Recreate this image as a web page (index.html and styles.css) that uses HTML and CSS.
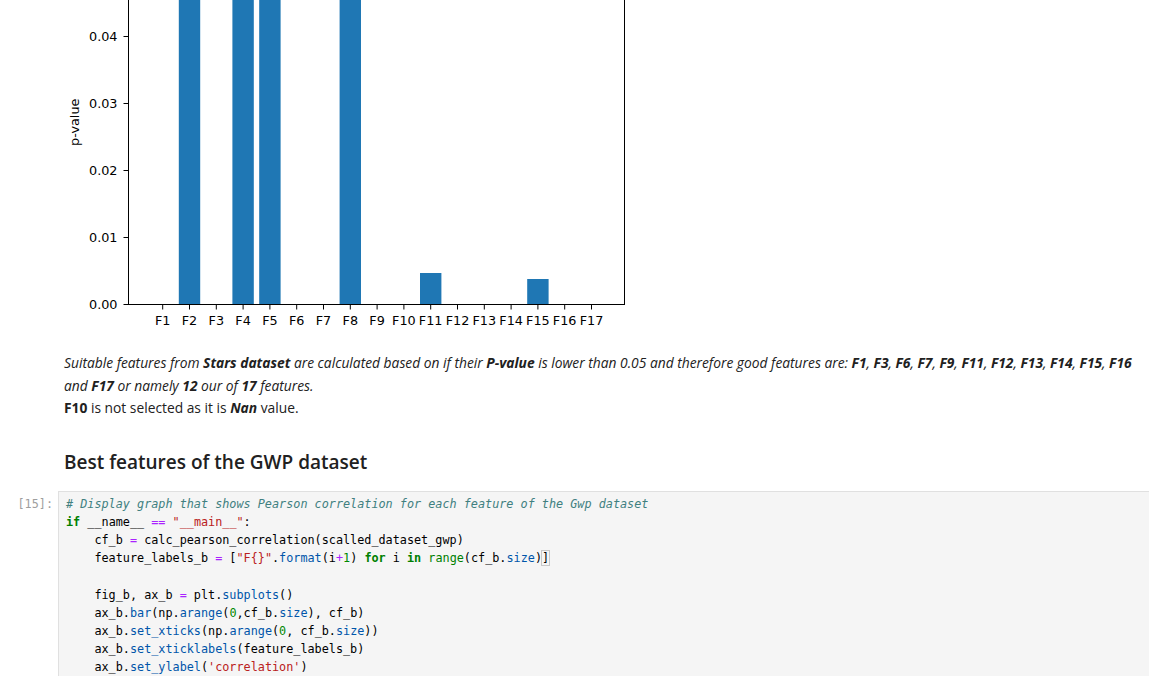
FILE: index.html
```html
<!DOCTYPE html>
<html lang="en">
<head>
<meta charset="utf-8">
<title>Notebook</title>
<link rel="stylesheet" href="styles.css">
</head>
<body>
<div class="notebook">
  <div class="output">
    <svg class="chart" width="600" height="335" viewBox="0 0 600 335" xmlns="http://www.w3.org/2000/svg">
      <g class="bars" fill="#1f77b4">
        <rect x="114.8" y="-10" width="21.4" height="314.5"/>
        <rect x="168.4" y="-10" width="21.4" height="314.5"/>
        <rect x="195.2" y="-10" width="21.4" height="314.5"/>
        <rect x="275.6" y="-10" width="21.4" height="314.5"/>
        <rect x="356.0" y="273" width="21.4" height="31.5"/>
        <rect x="463.2" y="279" width="21.4" height="25.5"/>
      </g>
      <g class="spines" stroke="#000" stroke-width="1" fill="none">
        <line x1="64.5" y1="-5" x2="64.5" y2="305"/>
        <line x1="560.5" y1="-5" x2="560.5" y2="305"/>
        <line x1="64" y1="304.5" x2="561" y2="304.5"/>
      </g>
      <g class="yticks" stroke="#000" stroke-width="1">
        <line x1="59.5" y1="304.5" x2="64.5" y2="304.5"/>
        <line x1="59.5" y1="237.5" x2="64.5" y2="237.5"/>
        <line x1="59.5" y1="170.5" x2="64.5" y2="170.5"/>
        <line x1="59.5" y1="103.5" x2="64.5" y2="103.5"/>
        <line x1="59.5" y1="36.5" x2="64.5" y2="36.5"/>
      </g>
      <g class="ylabels" text-anchor="end">
        <text x="53.5" y="308.8">0.00</text>
        <text x="53.5" y="241.8">0.01</text>
        <text x="53.5" y="174.8">0.02</text>
        <text x="53.5" y="107.8">0.03</text>
        <text x="53.5" y="40.8">0.04</text>
      </g>
      <text class="axis-title" text-anchor="middle" transform="translate(14.8,122.3) rotate(-90)">p-value</text>
      <g class="xticks" stroke="#000" stroke-width="1">
        <line x1="98.7" y1="304.5" x2="98.7" y2="309.5"/>
        <line x1="125.5" y1="304.5" x2="125.5" y2="309.5"/>
        <line x1="152.3" y1="304.5" x2="152.3" y2="309.5"/>
        <line x1="179.1" y1="304.5" x2="179.1" y2="309.5"/>
        <line x1="205.9" y1="304.5" x2="205.9" y2="309.5"/>
        <line x1="232.7" y1="304.5" x2="232.7" y2="309.5"/>
        <line x1="259.5" y1="304.5" x2="259.5" y2="309.5"/>
        <line x1="286.3" y1="304.5" x2="286.3" y2="309.5"/>
        <line x1="313.1" y1="304.5" x2="313.1" y2="309.5"/>
        <line x1="339.9" y1="304.5" x2="339.9" y2="309.5"/>
        <line x1="366.7" y1="304.5" x2="366.7" y2="309.5"/>
        <line x1="393.5" y1="304.5" x2="393.5" y2="309.5"/>
        <line x1="420.3" y1="304.5" x2="420.3" y2="309.5"/>
        <line x1="447.1" y1="304.5" x2="447.1" y2="309.5"/>
        <line x1="473.9" y1="304.5" x2="473.9" y2="309.5"/>
        <line x1="500.7" y1="304.5" x2="500.7" y2="309.5"/>
        <line x1="527.5" y1="304.5" x2="527.5" y2="309.5"/>
      </g>
      <g class="xlabels" text-anchor="middle">
        <text x="98.7" y="324.5">F1</text>
        <text x="125.5" y="324.5">F2</text>
        <text x="152.3" y="324.5">F3</text>
        <text x="179.1" y="324.5">F4</text>
        <text x="205.9" y="324.5">F5</text>
        <text x="232.7" y="324.5">F6</text>
        <text x="259.5" y="324.5">F7</text>
        <text x="286.3" y="324.5">F8</text>
        <text x="313.1" y="324.5">F9</text>
        <text x="339.9" y="324.5">F10</text>
        <text x="366.7" y="324.5">F11</text>
        <text x="393.5" y="324.5">F12</text>
        <text x="420.3" y="324.5">F13</text>
        <text x="447.1" y="324.5">F14</text>
        <text x="473.9" y="324.5">F15</text>
        <text x="500.7" y="324.5">F16</text>
        <text x="527.5" y="324.5">F17</text>
      </g>
    </svg>
  </div>

  <div class="markdown">
    <p class="note"><em>Suitable features from <strong>Stars dataset</strong> are calculated based on if their <strong>P-value</strong> is lower than 0.05 and therefore good features are: <strong>F1</strong>, <strong>F3</strong>, <strong>F6</strong>, <strong>F7</strong>, <strong>F9</strong>, <strong>F11</strong>, <strong>F12</strong>, <strong>F13</strong>, <strong>F14</strong>, <strong>F15</strong>, <strong>F16</strong> and <strong>F17</strong> or namely <strong>12</strong> our of <strong>17</strong> features.</em><br><strong>F10</strong> is not selected as it is <strong><em>Nan</em></strong> value.</p>
    <h2 class="heading">Best features of the GWP dataset</h2>
  </div>

  <div class="cell">
    <div class="prompt">[15]:</div>
    <pre class="code"><span class="c"># Display graph that shows Pearson correlation for each feature of the Gwp dataset</span>
<span class="k">if</span> __name__ <span class="o">==</span> <span class="s">"__main__"</span>:
    cf_b <span class="o">=</span> calc_pearson_correlation(scalled_dataset_gwp)
    feature_labels_b <span class="o">=</span> [<span class="s">"F{}"</span>.<span class="p">format</span>(i<span class="o">+</span><span class="n">1</span>) <span class="k">for</span> i <span class="k">in</span> <span class="b">range</span>(cf_b.<span class="p">size</span>)<span class="match">]</span>

    fig_b, ax_b <span class="o">=</span> plt.<span class="p">subplots</span>()
    ax_b.<span class="p">bar</span>(np.<span class="p">arange</span>(<span class="n">0</span>,cf_b.<span class="p">size</span>), cf_b)
    ax_b.<span class="p">set_xticks</span>(np.<span class="p">arange</span>(<span class="n">0</span>, cf_b.<span class="p">size</span>))
    ax_b.<span class="p">set_xticklabels</span>(feature_labels_b)
    ax_b.<span class="p">set_ylabel</span>(<span class="s">'correlation'</span>)
    plt.<span class="p">show</span>()</pre>
  </div>
</div>
</body>
</html>
```

FILE: styles.css
```css
* { box-sizing: border-box; }

html, body {
  margin: 0;
  padding: 0;
  background: #ffffff;
  overflow: hidden;
}

.notebook {
  width: 1149px;
}

.output {
  padding-left: 64px;
  height: 335px;
}

.chart {
  display: block;
  overflow: visible;
  font-family: "DejaVu Sans", sans-serif;
  font-size: 12.8px;
  fill: #000;
}

.markdown {
  padding: 17px 2px 0 64px;
  color: #212121;
  font-family: "Open Sans", "Noto Sans", sans-serif;
}

.note {
  margin: 0;
  font-size: 13.8px;
  line-height: 22.5px;
}

.note strong {
  font-weight: 700;
}

.heading {
  margin: 30px 0 0 0;
  font-size: 19px;
  font-weight: 600;
  line-height: 24px;
  color: #212121;
}

.cell {
  display: flex;
  margin-top: 17px;
}

.prompt {
  width: 58px;
  flex: none;
  padding: 4px 5px 0 0;
  text-align: right;
  color: #9e9e9e;
  font-family: "DejaVu Sans Mono", monospace;
  font-size: 11.8px;
  line-height: 18.2px;
}

.code {
  flex: 1;
  margin: 0;
  padding: 3px 7px 4px 7px;
  background: #f5f5f5;
  border: 1px solid #e0e0e0;
  border-right-width: 0;
  color: #000;
  font-family: "DejaVu Sans Mono", monospace;
  font-size: 11.8px;
  line-height: 18.2px;
  white-space: pre;
}

.code .c { color: #408080; font-style: italic; }
.code .k { color: #008000; font-weight: bold; }
.code .o { color: #aa22ff; }
.code .s { color: #ba2121; }
.code .n { color: #008800; }
.code .b { color: #008000; }
.code .p { color: #0055aa; }
.code .match { outline: 1px solid #c8c8c8; }
```
